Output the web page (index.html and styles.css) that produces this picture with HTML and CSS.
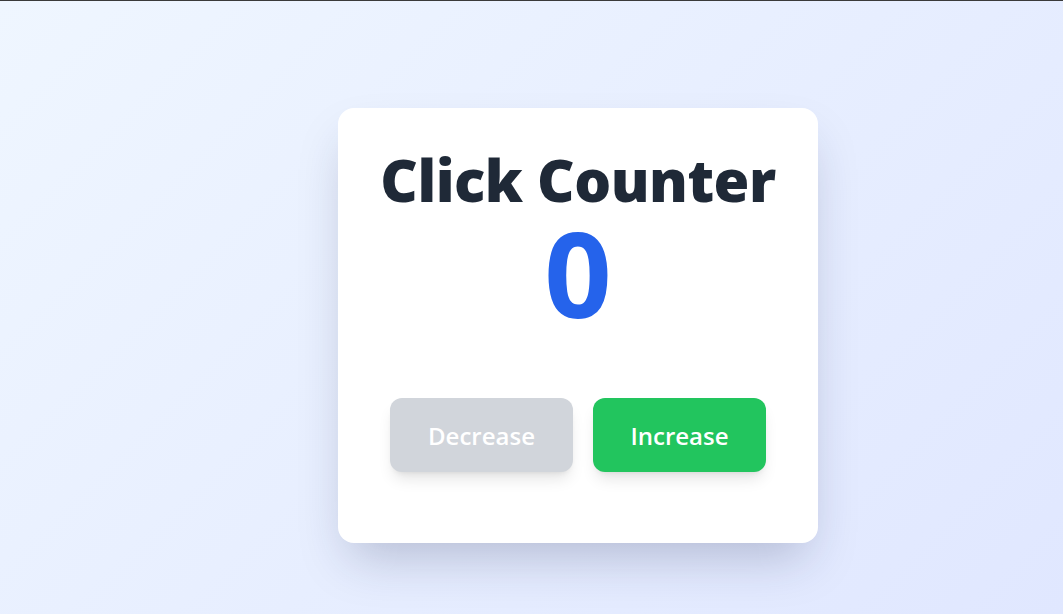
FILE: index.html
```html
<!DOCTYPE html>
<html>
<head>
<meta charset="utf-8">
<link rel="stylesheet" href="styles.css">
</head>
<body>
<div class="page">
  <div class="card">
    <h1 class="title">Click Counter</h1>
    <div class="count">0</div>
    <div class="actions">
      <button class="btn btn-dec">Decrease</button>
      <button class="btn btn-inc">Increase</button>
    </div>
  </div>
</div>
</body>
</html>
```
FILE: styles.css
```css
* { box-sizing: border-box; }
html, body { margin: 0; padding: 0; }
body {
  font-family: "Open Sans", "Noto Sans", sans-serif;
  border-top: 1px solid #3a3a3a;
  min-height: 614px;
  background: linear-gradient(135deg, #eff6ff 0%, #e0e7ff 100%);
}
.page {
  min-height: 613px;
  padding: 107px 0 0 338px;
}
.card {
  width: 480px;
  height: 435px;
  background: #fff;
  border-radius: 16px;
  box-shadow: 0 25px 50px -12px rgba(30, 41, 80, 0.25);
  padding: 42px 0 0;
  display: flex;
  flex-direction: column;
  align-items: center;
}
.title {
  margin: 0;
  font-size: 58px;
  line-height: 60px;
  font-weight: 800;
  color: #1f2937;
  letter-spacing: -0.5px;
}
.count {
  margin-top: 13px;
  font-size: 118px;
  line-height: 100px;
  font-weight: 700;
  color: #2563eb;
}
.actions {
  display: flex;
  gap: 20px;
  margin-top: 75px;
}
.btn {
  font-family: inherit;
  font-size: 24px;
  font-weight: 600;
  color: #fff;
  border: none;
  border-radius: 12px;
  height: 74px;
  padding: 0 0 0;
  box-shadow: 0 10px 15px -3px rgba(0,0,0,0.1), 0 4px 6px -4px rgba(0,0,0,0.1);
}
.btn-dec { background: #d1d5db; width: 183px; }
.btn-inc { background: #22c55e; width: 173px; }
```
